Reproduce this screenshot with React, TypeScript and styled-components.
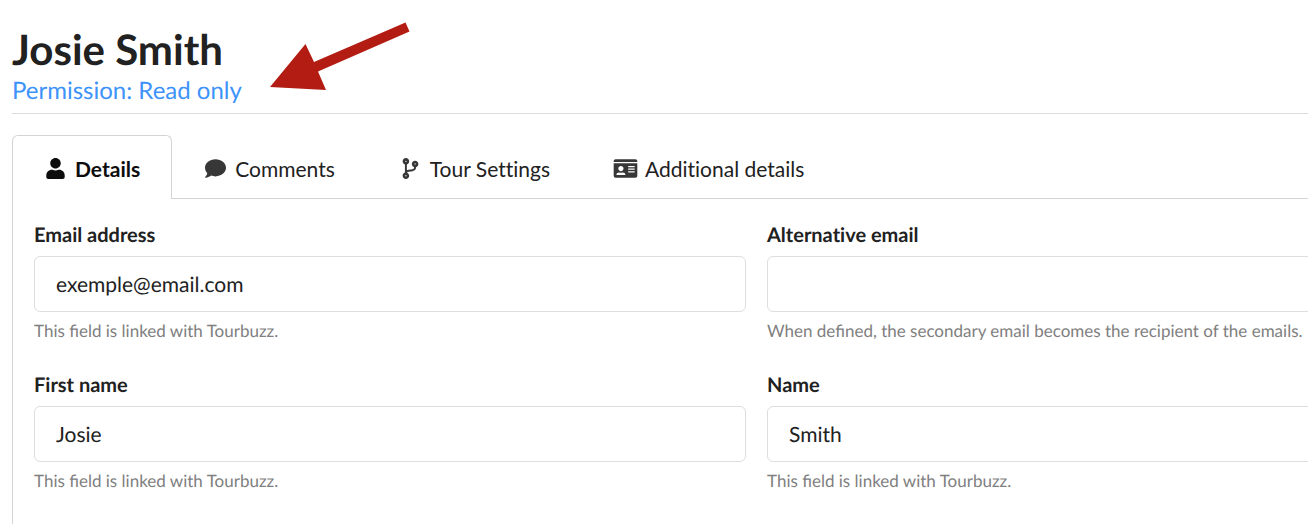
import React from 'react';
import styled, { createGlobalStyle } from 'styled-components';
import { FaUser, FaComment, FaCodeBranch, FaIdCard } from 'react-icons/fa';

const GlobalStyle = createGlobalStyle`
  * { box-sizing: border-box; }
  body {
    margin: 0;
    background: #fff;
    color: #212121;
    font-family: Lato, "Liberation Sans", sans-serif;
    text-rendering: geometricPrecision;
  }
`;

const Page = styled.main`
  display: flex;
  flex-direction: column;
  min-height: 100vh;
  padding: 24px 0 0 12px;
  overflow: hidden;
`;

const Header = styled.header`
  display: flex;
  align-items: flex-start;
  gap: 28px;
  padding-bottom: 5px;
  border-bottom: 1px solid #dcdcdd;
`;

const Title = styled.h1`
  margin: 0;
  font-size: 42px;
  line-height: 50px;
  font-weight: 700;
`;

const Permission = styled.p`
  margin: 0;
  font-size: 24px;
  line-height: 34px;
  color: #3d93fa;
`;

const Arrow = styled.svg`
  flex: none;
  margin-top: -2px;
`;

const Tabs = styled.nav`
  display: flex;
  margin-top: 21px;
  border-bottom: 1px solid #d4d4d5;
`;

const Tab = styled.button<{ $active?: boolean }>`
  display: flex;
  align-items: center;
  gap: 7px;
  height: 64px;
  margin-bottom: -1px;
  padding: 2px 31px 0 30px;
  border: 1px solid ${p => (p.$active ? '#d4d4d5' : 'transparent')};
  border-bottom: 0;
  border-radius: 6px 6px 0 0;
  background: ${p => (p.$active ? '#fff' : 'transparent')};
  color: ${p => (p.$active ? '#0d0d0d' : '#212121')};
  font-family: inherit;
  font-size: 21px;
  line-height: 28px;
  font-weight: ${p => (p.$active ? 700 : 400)};
  font-variant-ligatures: none;
  white-space: nowrap;
`;

const TabIcon = styled.span<{ $active?: boolean }>`
  display: flex;
  flex: none;
  color: ${p => (p.$active ? '#0d0d0d' : '#373737')};

  svg {
    width: 25px;
    height: 21px;
  }
`;

/* The form is wider than the window and continues past its right edge. */
const Panel = styled.form`
  display: grid;
  flex: 1;
  grid-template-columns: 1fr 1fr;
  align-content: start;
  gap: 28px 21px;
  width: calc(100% + 192px);
  padding: 22px 21px 21px;
  border-left: 1px solid #d4d4d5;
`;

const Field = styled.div`
  display: flex;
  flex-direction: column;
`;

const Label = styled.label`
  font-size: 20px;
  line-height: 29px;
  font-weight: 700;
  font-variant-ligatures: none;
`;

const Input = styled.input`
  height: 56px;
  margin: 6px 0 7px;
  padding: 1px 21px 0;
  border: 1px solid #dededf;
  border-radius: 6px;
  background: #fff;
  color: #212121;
  font-family: inherit;
  font-size: 21px;
  text-rendering: inherit;
`;

const Hint = styled.small`
  font-size: 17px;
  line-height: 24px;
  color: #808080;
`;

const tabs = [
  { label: 'Details', Icon: FaUser },
  { label: 'Comments', Icon: FaComment },
  { label: 'Tour Settings', Icon: FaCodeBranch },
  { label: 'Additional details', Icon: FaIdCard },
];

const linked = 'This field is linked with Tourbuzz.';
const fields = [
  { id: 'email', label: 'Email address', value: 'exemple@email.com', hint: linked },
  { id: 'alt-email', label: 'Alternative email', value: '', hint: 'When defined, the secondary email becomes the recipient of the emails.' },
  { id: 'first-name', label: 'First name', value: 'Josie', hint: linked },
  { id: 'name', label: 'Name', value: 'Smith', hint: linked },
];

export default function App() {
  return (
    <Page>
      <GlobalStyle />
      <Header>
        <div>
          <Title>Josie Smith</Title>
          <Permission>Permission: Read only</Permission>
        </div>
        <Arrow width="140" height="70" viewBox="270 22 140 70" aria-hidden="true">
          <path d="M270 87L305.500 44L314 62L405.500 22.500L409.500 31.500L318 71.500L326 90Z" fill="#b21c12" />
        </Arrow>
      </Header>
      <Tabs>
        {tabs.map(({ label, Icon }, i) => (
          <Tab key={label} type="button" $active={i === 0}>
            <TabIcon $active={i === 0}><Icon /></TabIcon>
            {label}
          </Tab>
        ))}
      </Tabs>
      <Panel>
        {fields.map(f => (
          <Field key={f.id}>
            <Label htmlFor={f.id}>{f.label}</Label>
            <Input id={f.id} defaultValue={f.value} readOnly />
            <Hint>{f.hint}</Hint>
          </Field>
        ))}
      </Panel>
    </Page>
  );
}
